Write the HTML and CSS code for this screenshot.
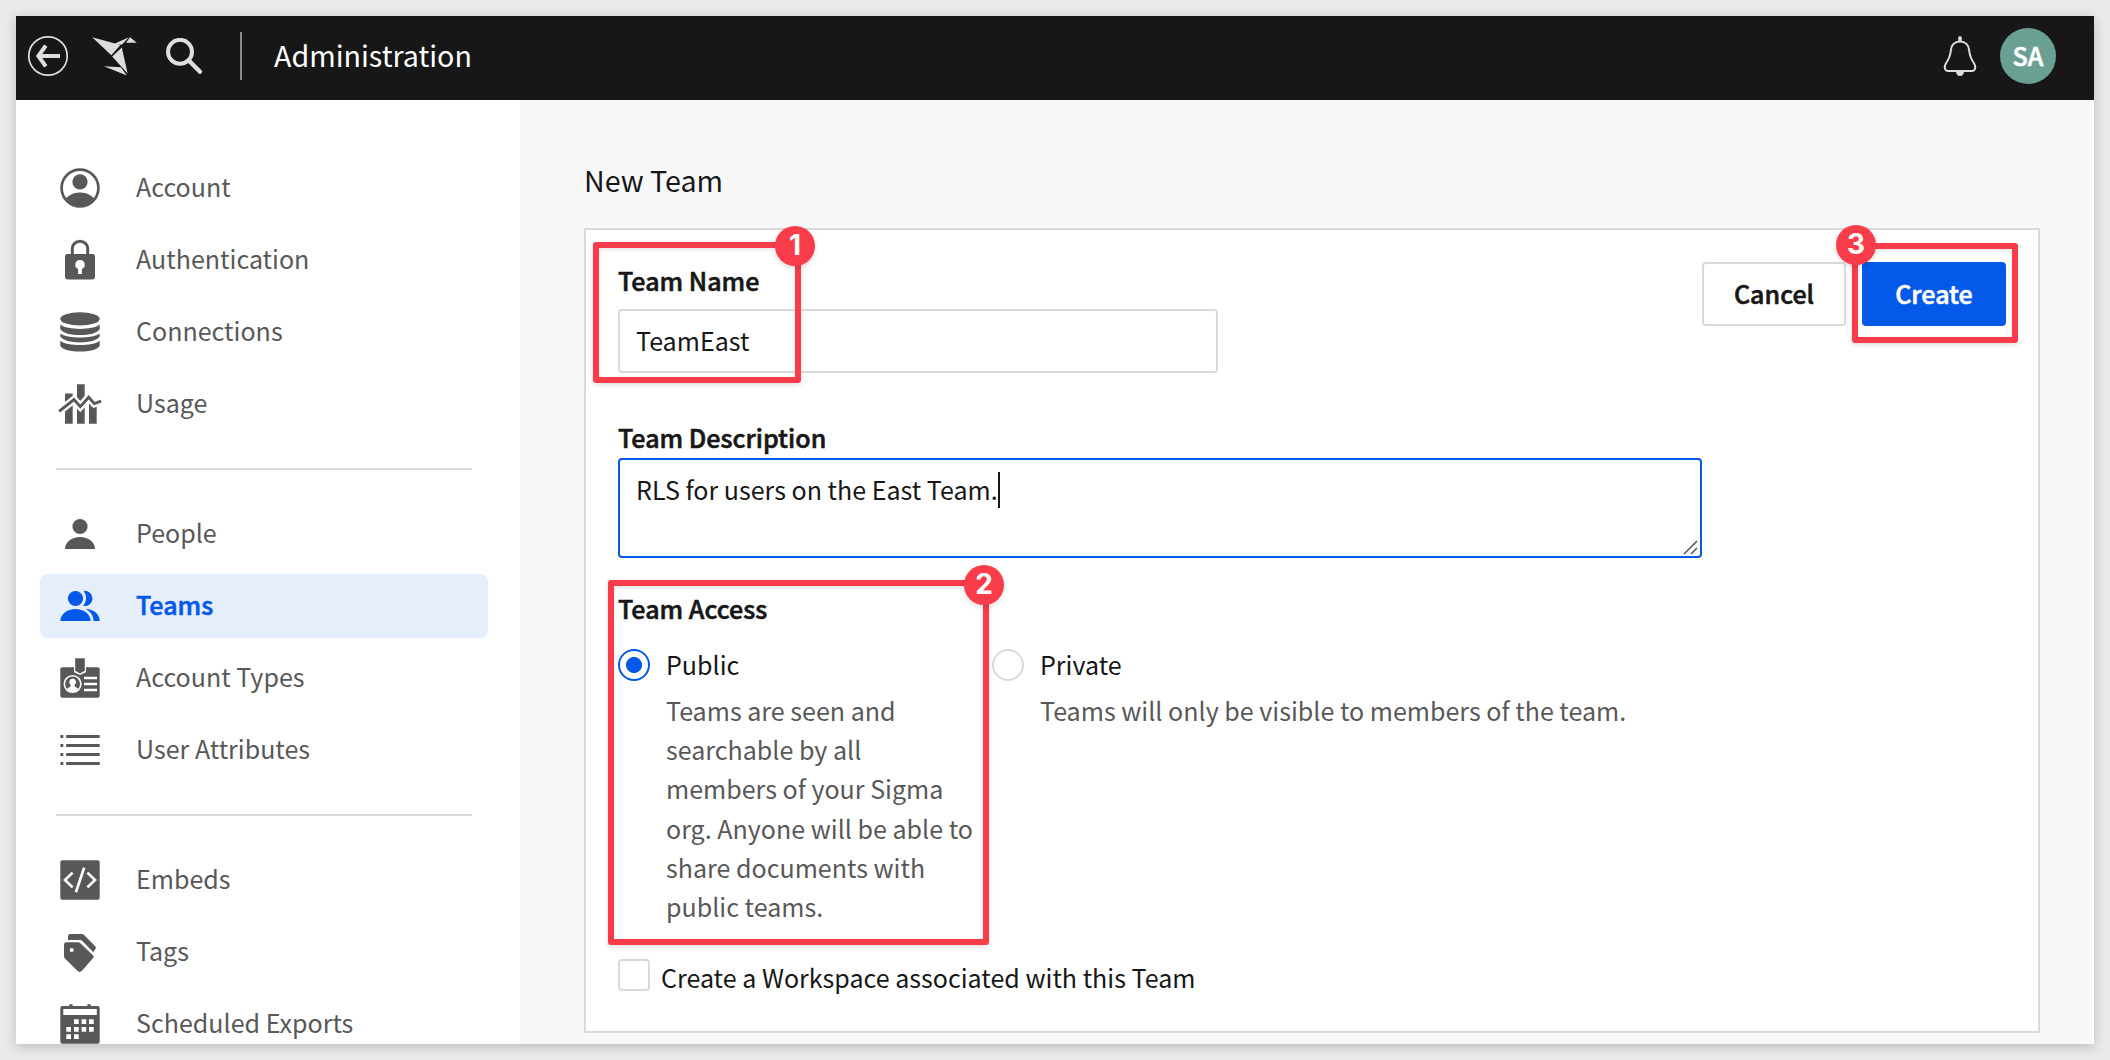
FILE: index.html
```html
<!DOCTYPE html>
<html lang="en">
<head>
<meta charset="utf-8">
<title>Administration - New Team</title>
<link rel="stylesheet" href="styles.css">
</head>
<body>
<div class="window">
  <header class="topbar">
    <svg class="icon-back" width="40" height="40" viewBox="0 0 40 40"><circle cx="20" cy="20" r="19.2" fill="none" stroke="#dedede" stroke-width="1.7"/><path d="M32 20H10M17.800 9.600L10.400 20L17.800 30.400" fill="none" stroke="#dedede" stroke-width="4.1"/></svg>
    <svg class="icon-bird" width="46" height="40" viewBox="0 0 46 40" fill="#dedede"><path d="M.2 1.200L28.400 9L19.300 19.300zM22.600 7.800L36.800 1.200L29.800 8.700zM38 1.300L44.800 6.700H34zM29.800 11.400L35.600 37.600L20.200 20.600zM12 30.300L28.800 31.200L34.800 39.400z"/></svg>
    <svg class="icon-search" width="38" height="38" viewBox="0 0 38 38" fill="none" stroke="#dedede"><circle cx="14" cy="13.800" r="12" stroke-width="4"/><path d="M22.500 22.300L34 33.800" stroke-width="4.400" stroke-linecap="round"/></svg>
    <span class="topbar-divider"></span>
    <span class="topbar-title">Administration</span>
    <svg class="icon-bell" width="36" height="40" viewBox="0 0 36 40"><path d="M18 5.400C12.500 5.400 9.300 9.300 8.900 14C8.400 20 7.300 22.500 4 27.200C1.800 30.600 2.600 35 6 35H30C33.400 35 34.200 30.600 32 27.200C28.700 22.500 27.600 20 27.100 14C26.700 9.300 23.500 5.400 18 5.400Z" fill="none" stroke="#dedede" stroke-width="2"/><path d="M16.200 5.200V1.600Q16.200 .2 18 .2T19.800 1.600V5.200zM14 35.400H22C22 38.600 20 40 18 40S14 38.600 14 35.400z" fill="#dedede"/></svg>
    <span class="avatar"><span class="avatar-text">SA</span></span>
  </header>

  <div class="body">
    <nav class="sidebar">
      <div class="nav-item"><svg class="nav-icon" viewBox="0 0 40 40"><defs><clipPath id="ring"><circle cx="20" cy="20" r="19"/></clipPath></defs><circle cx="20" cy="20" r="18.400" fill="none" stroke="currentColor" stroke-width="2.700"/><circle cx="20" cy="13.900" r="7.600"/><ellipse cx="20" cy="36" rx="16" ry="11.400" clip-path="url(#ring)"/></svg><span class="nav-label">Account</span></div>
      <div class="nav-item"><svg class="nav-icon" viewBox="0 0 40 40"><path d="M12.300 15V8.500A7.700 7.200 0 0 1 27.700 8.500V15" fill="none" stroke="currentColor" stroke-width="3"/><path fill-rule="evenodd" d="M7.500 14H32.500Q35 14 35 16.500V37Q35 39.400 32.500 39.400H7.500Q5 39.400 5 37V16.500Q5 14 7.500 14zM20 20A4.700 4.700 0 0 0 18.100 29V34H21.900V29A4.700 4.700 0 0 0 20 20z"/></svg><span class="nav-label">Authentication</span></div>
      <div class="nav-item"><svg class="nav-icon" viewBox="0 0 40 40"><ellipse cx="20" cy="6.900" rx="19.700" ry="6.600"/><path d="M.3 12.600C7 18.400 33 18.400 39.700 12.600V17.200C35 25 5 25 .3 17.200zM.3 21.500C7 26.900 33 26.900 39.700 21.500V24.600C35 32.400 5 32.400 .3 24.600zM.3 28.700C7 34.500 33 34.500 39.700 28.700V34C35 41.400 5 41.400 .3 34z"/></svg><span class="nav-label">Connections</span></div>
      <div class="nav-item"><svg class="nav-icon" viewBox="0 0 40 40"><path d="M5 9.400H12.700V39.700H5zM17 .2H24.700V39.700H17zM29 20H36.700V39.700H29z"/><path d="M-.7 27.200L14 15.600L20.300 22.600L28.700 13.200L34.300 19.600L41 17.300" fill="none" stroke="#fff" stroke-width="7.600"/><path d="M-.9 27.300L14 15.600L20.300 22.600L28.700 13.200L34.300 19.600L41.200 17.200" fill="none" stroke="currentColor" stroke-width="2.900"/></svg><span class="nav-label">Usage</span></div>
      <hr class="nav-divider">
      <div class="nav-item"><svg class="nav-icon" viewBox="0 0 40 40"><circle cx="20" cy="12.500" r="7.600"/><path d="M5 35C5 28 11.500 23 20 23S35 28 35 35z"/></svg><span class="nav-label">People</span></div>
      <div class="nav-item nav-item-active"><svg class="nav-icon" viewBox="0 0 40 40"><path d="M23.600 5A7.600 7.600 0 1 1 23.200 19.900A11.500 11.500 0 0 0 23.600 5zM25.600 23C34 23 39.700 28 39.700 35H33.600C33.400 29.500 30.500 25.500 25.600 23z"/><circle cx="15.500" cy="12.500" r="7.600"/><path d="M.4 35C.4 28 7 23 15.500 23S30.600 28 30.600 35z"/></svg><span class="nav-label">Teams</span></div>
      <div class="nav-item"><svg class="nav-icon" viewBox="0 0 40 40"><rect x=".3" y="9.300" width="39.400" height="30.400" rx="2"/><path d="M14 8V14.200L20 17L26 14.200V8z" fill="#fff"/><path d="M15.200 .2H24.800V12.800L20 15.500L15.200 12.800z"/><circle cx="12.600" cy="26" r="9.100" fill="#fff"/><circle cx="12.600" cy="26" r="7.500"/><path d="M12.600 20.600a3.600 3.600 0 0 0-2 6.500v1.500l-3.600 1.800C8.500 33 10.300 34 12.600 34s4.100-1 5.600-3.600l-3.600-1.800v-1.500a3.600 3.600 0 0 0-2-6.500z" fill="#fff"/><path d="M24 20H37M24 26H37M24 32H37" stroke="#fff" stroke-width="2.600"/></svg><span class="nav-label">Account Types</span></div>
      <div class="nav-item"><svg class="nav-icon" viewBox="0 0 40 40"><path d="M.4 6.500H3.300M6.200 6.500H39.700M.4 15.500H3.300M6.200 15.500H39.700M.4 24.500H3.300M6.200 24.500H39.700M.4 33.500H3.300M6.200 33.500H39.700" stroke="currentColor" stroke-width="3"/></svg><span class="nav-label">User Attributes</span></div>
      <hr class="nav-divider">
      <div class="nav-item"><svg class="nav-icon" viewBox="0 0 40 40"><rect x=".3" y=".3" width="39.400" height="39.400" rx="2.200"/><path d="M12.600 12.600L5 20L12.600 27.400M27.400 12.600L35 20L27.400 27.400M24.200 7.600L15.900 32.200" fill="none" stroke="#fff" stroke-width="2.700"/></svg><span class="nav-label">Embeds</span></div>
      <div class="nav-item"><svg class="nav-icon" viewBox="0 0 40 40"><path fill-rule="evenodd" d="M6.500 10.300H18Q19.500 10.300 20.600 11.400L33 23.200Q34.200 24.400 33.300 25.800L22 38.800Q19.700 41 17.400 38.800L5 26.600Q4 25.500 4 24V12.800Q4 10.300 6.500 10.300zM11.700 16A2 2 0 1 0 11.700 20A2 2 0 1 0 11.700 16z"/><path d="M8 8V4.500Q8 2 10.500 2H21.500Q23 2 24.100 3.100L35.200 14.200Q36.400 15.400 35.600 16.800L33.300 20.300L22.800 9.400Q21.500 8 19.800 8z"/></svg><span class="nav-label">Tags</span></div>
      <div class="nav-item"><svg class="nav-icon" viewBox="0 0 40 40"><rect x=".3" y="2" width="39.400" height="37.700" rx="2"/><path d="M9.300 .3H12.600V3H9.300zM27.400 .3H30.700V3H27.400z"/><path d="M3.300 5H36.800V11H3.300zM14 15.300H18.700V20H14zM21.600 15.300H26.200V20H21.600zM29 15.300H33.700V20H29zM6.300 23H11V27.700H6.300zM14 23H18.700V27.700H14zM21.600 23H26.200V27.700H21.600zM29 23H33.700V27.700H29zM6.300 30.300H11V35H6.300zM14 30.300H18.700V35H14z" fill="#fff"/></svg><span class="nav-label">Scheduled Exports</span></div>
    </nav>

    <main class="main">
      <h1 class="page-title">New Team</h1>
      <section class="panel">
        <div class="panel-top">
          <div class="field">
            <label class="label">Team Name</label>
            <div class="input"><span class="input-text">TeamEast</span></div>
          </div>
          <div class="actions">
            <div class="button"><span class="button-text">Cancel</span></div>
            <div class="button button-primary"><span class="button-text">Create</span></div>
          </div>
        </div>
        <label class="label label-description">Team Description</label>
        <div class="textarea"><span class="textarea-text">RLS for users on the East Team.</span><span class="caret"></span>
          <svg class="grip" width="15" height="15" viewBox="0 0 15 15"><path d="M1 14L14 1M8 14L14 8" stroke="#5a5a5a" stroke-width="1.600" fill="none"/></svg>
        </div>
        <div class="label label-access">Team Access</div>
        <div class="options">
          <div class="option option-public">
            <span class="radio radio-on"></span>
            <div class="option-copy"><div class="option-name">Public</div><div class="option-hint">Teams are seen and<br>searchable by all<br>members of your Sigma<br>org. Anyone will be able to<br>share documents with<br>public teams.</div></div>
          </div>
          <div class="option">
            <span class="radio"></span>
            <div class="option-copy"><div class="option-name">Private</div><div class="option-hint">Teams will only be visible to members of the team.</div></div>
          </div>
        </div>
        <div class="check-row"><span class="checkbox"></span><span class="check-label">Create a Workspace associated with this Team</span></div>
      </section>
    </main>
  </div>
</div>

<div class="callout callout-name"></div><div class="badge badge-name">1</div>
<div class="callout callout-access"></div><div class="badge badge-access">2</div>
<div class="callout callout-create"></div><div class="badge badge-create">3</div>
</body>
</html>
```
FILE: styles.css
```css
* { box-sizing: border-box; }

body {
  margin: 0;
  padding: 16px;
  height: 1060px;
  overflow: hidden;
  background: #eaeaea;
  color: #171717;
  font-family: "Noto Sans CJK SC", "Noto Sans", sans-serif;
  font-size: 25.06px;
  line-height: 36px;
}

.window {
  height: 1028px;
  display: flex;
  flex-direction: column;
  background: #fff;
  box-shadow: 0 3px 12px rgba(0, 0, 0, .2);
}

/* Top bar */
.topbar {
  flex: none;
  height: 84px;
  display: flex;
  align-items: center;
  padding: 0 38px 4px 12px;
  background: #171717;
}
.topbar svg { flex: none; }
.icon-bird { margin-left: 24px; }
.topbar .icon-search { margin: 2px 0 0 28px; }
.topbar-divider { width: 2px; height: 48px; margin-left: 36px; background: #8b8b8b; }
.topbar-title {
  margin-left: 32px;
  padding-bottom: 3px;
  color: #fff;
  font-size: 28.64px;
}
.icon-bell { margin-left: auto; margin-right: 22px; }
.avatar {
  width: 56px;
  height: 56px;
  display: flex;
  align-items: center;
  justify-content: center;
  border-radius: 50%;
  background: #6a9f94;
  color: #fff;
  font-weight: 500;
  -webkit-text-stroke: .6px;
}
.avatar-text { padding-bottom: 3px; }

.body { flex: 1; min-height: 0; display: flex; }

/* Sidebar */
.sidebar {
  flex: none;
  width: 504px;
  padding: 56px 32px 0 24px;
  display: flex;
  flex-direction: column;
  gap: 8px;
  overflow: hidden;
  color: #585858;
}
.nav-item {
  flex: none;
  height: 64px;
  display: flex;
  align-items: center;
  gap: 36px;
  padding-left: 20px;
  border-radius: 8px;
}
.nav-item-active { background: #e6eefc; color: #0559e8; font-weight: 500; }
.nav-item-active .nav-label { -webkit-text-stroke: .6px; }
.nav-icon { flex: none; width: 40px; height: 40px; overflow: visible; fill: currentColor; }
.nav-label { padding-bottom: 4px; white-space: nowrap; }
.nav-divider {
  flex: none;
  width: 416px;
  height: 2px;
  margin: 24px 16px;
  border: 0;
  background: #d9d9d9;
}

/* Main */
.main { flex: 1; padding: 61px 54px 11px 64px; background: #f8f8f8; }
.page-title { margin: 0; height: 67px; font-size: 28.64px; font-weight: 400; line-height: 38px; }
.panel {
  height: 805px;
  padding: 32px;
  border: 2px solid #dadada;
  background: #fff;
}
.panel-top { display: flex; justify-content: space-between; }
.label { display: block; line-height: 36px; font-weight: 500; -webkit-text-stroke: .6px; }
.input {
  width: 600px;
  height: 64px;
  margin-top: 11px;
  padding: 11px 16px;
  border: 2px solid #dadada;
  border-radius: 4px;
}
.actions { display: flex; gap: 16px; }
.button {
  width: 144px;
  height: 64px;
  display: flex;
  align-items: center;
  justify-content: center;
  border: 2px solid #dadada;
  border-radius: 4px;
  font-weight: 500;
  -webkit-text-stroke: .6px;
}
.button-primary { border-color: #0559e8; background: #0559e8; color: #fff; }
.button-text { padding-bottom: 2px; }
.label-description { margin-top: 46px; }
.textarea {
  position: relative;
  display: flex;
  width: 1084px;
  height: 100px;
  margin-top: 3px;
  padding: 11px 16px;
  border: 2px solid #0559e8;
  border-radius: 4px;
}
.caret { width: 2px; height: 36px; margin-top: 1px; background: #171717; }
.grip { position: absolute; right: 2px; bottom: 1px; }
.label-access { margin-top: 32px; }
.options { display: flex; margin-top: 20px; }
.option { display: flex; gap: 16px; }
.option-public { width: 374px; }
.radio {
  flex: none;
  width: 32px;
  height: 32px;
  margin-top: 3px;
  border: 2px solid #dadada;
  border-radius: 50%;
}
.radio-on {
  border-color: #0559e8;
  background: radial-gradient(circle, #0559e8 7.6px, #fff 8.4px);
}
.option-name { line-height: 36px; }
.option-hint { margin-top: 9px; line-height: 39.2px; color: #585858; white-space: nowrap; }
.check-row { display: flex; gap: 11px; margin-top: 33px; }
.checkbox { width: 32px; height: 32px; border: 2px solid #dadada; border-radius: 4px; }
.check-label { line-height: 36px; }

/* Numbered callouts drawn over the page */
.callout {
  position: absolute;
  border: 6px solid #f83c49;
  border-radius: 3px;
  box-shadow: 0 2px 5px rgba(0, 0, 0, .13), inset 0 2px 4px rgba(0, 0, 0, .1);
}
.callout-name { left: 593px; top: 242px; width: 208px; height: 141px; }
.callout-access { left: 608px; top: 580px; width: 381px; height: 365px; }
.callout-create { left: 1852px; top: 243px; width: 166px; height: 100px; }
.badge {
  position: absolute;
  width: 40px;
  height: 40px;
  border-radius: 50%;
  background: #f83c49;
  color: #fff;
  font: 700 28px/38px Inter, sans-serif;
  text-align: center;
  box-shadow: 0 2px 5px rgba(0, 0, 0, .15);
}
.badge-name { left: 775px; top: 226px; }
.badge-access { left: 964px; top: 565px; }
.badge-create { left: 1836px; top: 225px; }
```
